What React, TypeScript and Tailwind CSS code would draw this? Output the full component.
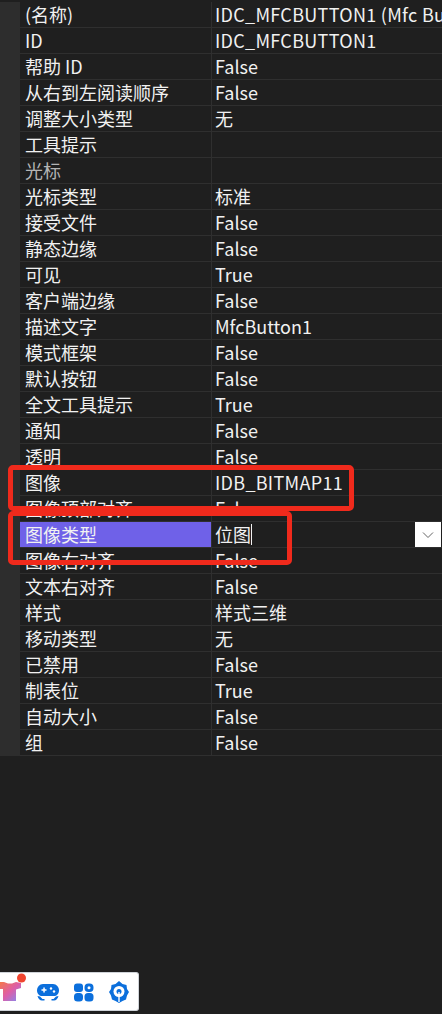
const rows: [string, string][] = [
  ["(名称)", "IDC_MFCBUTTON1 (Mfc Button)"],
  ["ID", "IDC_MFCBUTTON1"],
  ["帮助 ID", "False"],
  ["从右到左阅读顺序", "False"],
  ["调整大小类型", "无"],
  ["工具提示", ""],
  ["光标", ""],
  ["光标类型", "标准"],
  ["接受文件", "False"],
  ["静态边缘", "False"],
  ["可见", "True"],
  ["客户端边缘", "False"],
  ["描述文字", "MfcButton1"],
  ["模式框架", "False"],
  ["默认按钮", "False"],
  ["全文工具提示", "True"],
  ["通知", "False"],
  ["透明", "False"],
  ["图像", "IDB_BITMAP11"],
  ["图像顶部对齐", "False"],
  ["图像类型", "位图"],
  ["图像右对齐", "False"],
  ["文本右对齐", "False"],
  ["样式", "样式三维"],
  ["移动类型", "无"],
  ["已禁用", "False"],
  ["制表位", "True"],
  ["自动大小", "False"],
  ["组", "False"],
];

function Row({ name, value }: { name: string; value: string }) {
  const selected = name === "图像类型";
  const dim = name === "光标";
  const caps = value.startsWith("ID");
  return (
    <div className="flex h-[26px]">
      <div className="w-5 shrink-0 bg-[#2d2d2d]" />
      <div className="flex min-w-0 flex-1 border-b border-[#2f2f2f]">
        <div
          className={`flex w-[192px] shrink-0 items-center border-r border-[#2f2f2f] pb-px pl-[5px] ${
            selected ? "bg-[#6f61e8] text-[#f1f1f1]" : dim ? "text-[#b4b4b4]" : "text-[#f1f1f1]"
          }`}
        >
          {name}
        </div>
        <div className="flex min-w-0 flex-1 items-center justify-between overflow-hidden whitespace-nowrap pl-[3px] text-[#f1f1f1]">
          <span className={`flex items-center pb-px ${caps ? "tracking-[0.3px]" : ""}`}>
            {value}
            {selected && <span className="h-[21px] w-px bg-[#f1f1f1]" />}
          </span>
          {selected && (
            <span className="mr-[1px] flex h-[25px] w-[26px] shrink-0 items-center justify-center bg-white">
              <svg width="12" height="8" viewBox="0 0 12 8" fill="none" stroke="#666" strokeWidth="1">
                <path d="M1 1.500l5 5 5-5" />
              </svg>
            </span>
          )}
        </div>
      </div>
    </div>
  );
}

function Toolbar() {
  return (
    <div className="absolute left-0 top-[972px] h-[39px] w-[139px] overflow-hidden rounded-r-[3px] border border-l-0 border-[#cfd3d8] bg-white">
      <svg className="absolute left-0 top-0" width="30" height="34" viewBox="0 0 30 34">
        <defs>
          <linearGradient id="shirt" x1="0" y1="0" x2="1" y2="1">
            <stop offset="0" stopColor="#f5774a" />
            <stop offset="0.5" stopColor="#dd5fa8" />
            <stop offset="1" stopColor="#7f8cf5" />
          </linearGradient>
        </defs>
        <path d="M0 9h4l4 1.500h4l4-1.500 5 1v5l-5 1.500V28H3V16H0z" fill="url(#shirt)" />
        <circle cx="21.500" cy="5" r="4.500" fill="#f0452f" />
      </svg>
      <svg className="absolute left-[36px] top-[10px]" width="24" height="19" viewBox="0 0 24 19" fill="#0b6fdc">
        <path d="M7 1h10c3.500 0 6 3 6 6.500 0 3.500-2.500 5.500-5 5.500H6c-2.500 0-5-2-5-5.500C1 4 3.500 1 7 1z" />
        <path d="M1.500 13c.5 2.500 2.500 4.500 4.500 4.500h2.500V16H6.500l-2.500-2.500zM22.500 13c-.5 2.500-2.500 4.500-4.500 4.500h-2.500V16h2l2.500-2.500z" />
        <path d="M5.500 6.300h5v1.500h-5zM7.300 4.500h1.500v5H7.300z" fill="#fff" />
        <circle cx="15" cy="5.500" r="1.200" fill="#fff" />
        <circle cx="18" cy="8.500" r="1.200" fill="#fff" />
      </svg>
      <svg className="absolute left-[73px] top-[10px]" width="21" height="19" viewBox="0 0 21 19" fill="#0b6fdc">
        <rect x="1" y="0.500" width="9" height="8.500" rx="3" />
        <rect x="11.500" y="0.500" width="9" height="8.500" rx="4" />
        <rect x="1" y="10" width="9" height="8.500" rx="3.500" />
        <rect x="11.500" y="10" width="9" height="8.500" rx="3.500" />
        <circle cx="16" cy="4.700" r="1.500" fill="#fff" />
      </svg>
      <svg className="absolute left-[108px] top-[8px]" width="22" height="23" viewBox="0 0 22 23" fill="#0b6fdc">
        <path d="M11 0l3.500 3 4 1 .5 4 2 3-2 3.500-1 4-3.500 1.500-3.500 2-3.500-2L4 18.500l-1-4L1 11l2-3 .5-4 4-1z" />
        <circle cx="11" cy="10.500" r="5.500" fill="#fff" />
        <circle cx="11" cy="10.500" r="2.500" fill="#0b6fdc" />
        <path d="M10.300 11h1.400v10h-1.400z" fill="#fff" />
      </svg>
    </div>
  );
}

export default function App() {
  return (
    <div className="relative h-[1014px] w-[442px] overflow-hidden bg-[#1f1f1f] font-['Noto_Sans_CJK_SC','Noto_Sans',sans-serif] text-[18px] leading-[24px]">
      <div className="pt-[2px]">
        {rows.map(([name, value]) => (
          <Row key={name} name={name} value={value} />
        ))}
      </div>

      {/* red annotation boxes */}
      <div className="absolute left-[8px] top-[465px] h-[46px] w-[346px] rounded-[5px] border-[5px] border-[#f02a1c]" />
      <div className="absolute left-[8px] top-[511px] h-[54px] w-[284px] rounded-[5px] border-[5px] border-[#f02a1c]" />

      <Toolbar />
    </div>
  );
}
